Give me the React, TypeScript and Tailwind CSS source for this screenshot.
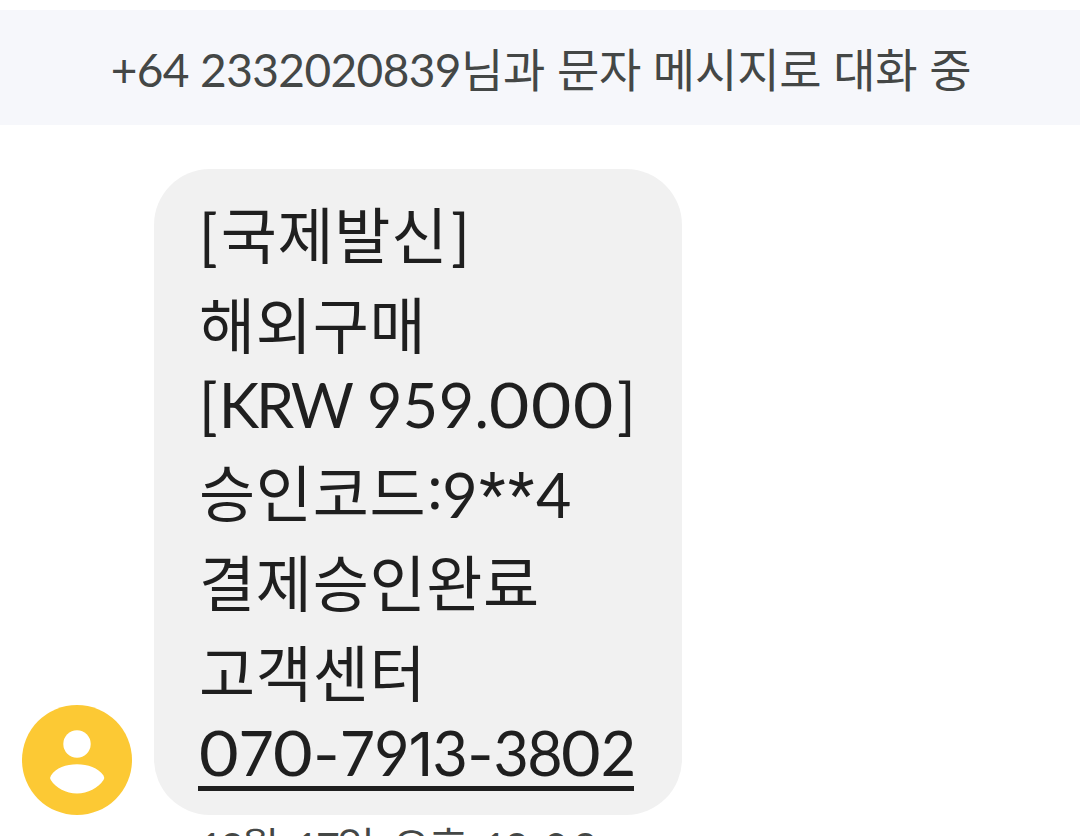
import clsx from "clsx";

type Part = { text: string; className?: string };
type Line = { parts: Part[]; latin?: boolean; link?: boolean };

const lines: Line[] = [
  {
    parts: [
      { text: "[", className: "tracking-[3px]" },
      { text: "국제발신" },
      { text: "]", className: "ml-[3px]" },
    ],
  },
  { parts: [{ text: "해외구매" }] },
  {
    latin: true,
    parts: [
      { text: "[", className: "tracking-[1px]" },
      { text: "KRW", className: "tracking-[-3px]" },
      { text: " 959.", className: "tracking-[0.5px]" },
      { text: "000", className: "mr-[15px] inline-block origin-left scale-x-[1.14] tracking-[1.5px]" },
      { text: "]", className: "ml-[2px]" },
    ],
  },
  {
    parts: [
      { text: "승인코드" },
      { text: ":", className: "relative -top-[8px] mr-[-1px] ml-[1px]" },
      { text: "9", className: "relative top-px" },
      { text: "**", className: "relative -top-[1px] left-[1px] font-['Roboto'] tracking-[2.5px]" },
      { text: "4", className: "relative top-px" },
    ],
  },
  { parts: [{ text: "결제승인완료" }] },
  { parts: [{ text: "고객센터" }] },
  {
    latin: true,
    link: true,
    parts: [
      { text: "0", className: "mr-[4px] ml-px inline-block origin-left scale-x-[1.12]" },
      { text: "7", className: "tracking-[-1px]" },
      { text: "0", className: "mr-[5px] inline-block origin-left scale-x-[1.12]" },
      { text: "-", className: "mx-[2px] inline-block scale-x-120" },
      { text: "79", className: "tracking-[-1px]" },
      { text: "1", className: "font-['Inter'] tracking-[-1px]" },
      { text: "3", className: "tracking-[-1px]" },
      { text: "-", className: "mx-[2px] inline-block scale-x-120" },
      { text: "38", className: "tracking-[-1.5px]" },
      { text: "0", className: "mr-[4px] inline-block origin-left scale-x-[1.12]" },
      { text: "2" },
    ],
  },
];

function Avatar() {
  return (
    <svg viewBox="0 0 110 110" className="size-[110px] shrink-0" aria-hidden="true">
      <circle cx="55" cy="55" r="55" fill="#fcc934" />
      <circle cx="55" cy="39" r="13.7" fill="#fff" />
      <path
        d="M29 70.5C34 63 44 59.3 55 59.3S76 63 81.500 70.500Q83 73 81.500 75C76 83 66 88.500 55 88.500S34 83 28.800 75Q27.300 73 29 70.500Z"
        fill="#fff"
      />
    </svg>
  );
}

export default function App() {
  return (
    <main className="h-[836px] w-[1080px] overflow-hidden bg-white pt-[10px] font-['Lato','Noto_Sans_CJK_KR',sans-serif] text-[#1f1f1f]">
      <header className="flex h-[115px] items-center justify-center bg-[#f6f7fb] pt-[3px] text-[46px] whitespace-nowrap text-[#444746]">
        <span className="ml-[2px] tracking-[-0.6px]">+64 2332020839</span>
        <span className="tracking-[-0.15px]">님과 문자 메시지로 대화 중</span>
      </header>

      <section className="mt-[44px] flex items-end gap-[22px] pl-[22px]">
        <Avatar />
        <div className="h-[646px] w-[528px] rounded-[56px] bg-[#f1f1f1] pt-[22px] pl-[45px] text-[61px] whitespace-pre">
          {lines.map((line, i) => (
            <p
              key={i}
              className={clsx(
                line.latin ? "h-[78px] leading-[68px]" : "h-[90px] leading-[90px] tracking-[0.7px]",
                line.link && "-ml-px",
              )}
            >
              {line.parts.map((part, j) => (
                <span key={j} className={part.className}>
                  {part.text}
                </span>
              ))}
              {line.link && <span className="-mt-[2px] block h-[5px] w-[436px] bg-[#1f1f1f]" />}
            </p>
          ))}
        </div>
      </section>

      <p className="mt-[5px] flex pl-[199px] text-[41px] leading-[54px] whitespace-nowrap text-[#444746]">
        <span className="tracking-[-2.5px]">12월</span>
        <span className="ml-[18px] tracking-[-2.5px]">17일</span>
        <span className="ml-[20px] tracking-[-0.5px]">오후</span>
        <span className="ml-[16px] tracking-[-2px]">12</span>
        <span className="ml-[2px] tracking-[5.5px]">:08</span>
      </p>
    </main>
  );
}
